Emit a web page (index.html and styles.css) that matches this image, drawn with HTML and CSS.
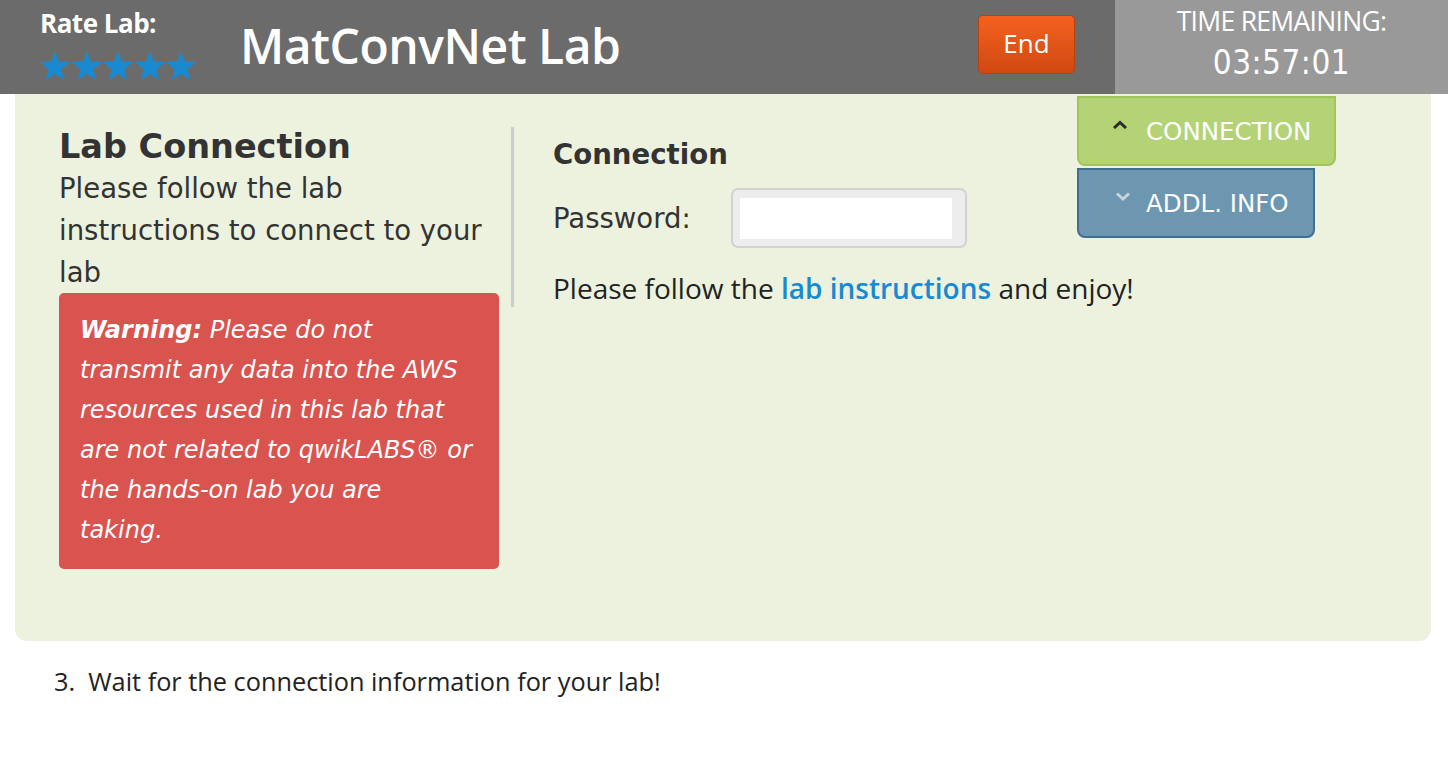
FILE: index.html
```html
<!DOCTYPE html>
<html>
<head>
<meta charset="utf-8">
<link rel="stylesheet" href="styles.css">
</head>
<body>
<header class="topbar">
  <div class="rate">
    <div class="rate-label">Rate Lab:</div>
    <div class="stars">
      <svg viewBox="0 0 24 23" class="star"><path d="M12 0.5l2.9 7.3 8.3.5-6.4 5.3 2.1 8.1L12 17.2l-6.9 4.5 2.1-8.1L0.8 8.3l8.3-.5z"/></svg>
      <svg viewBox="0 0 24 23" class="star"><path d="M12 0.5l2.9 7.3 8.3.5-6.4 5.3 2.1 8.1L12 17.2l-6.9 4.5 2.1-8.1L0.8 8.3l8.3-.5z"/></svg>
      <svg viewBox="0 0 24 23" class="star"><path d="M12 0.5l2.9 7.3 8.3.5-6.4 5.3 2.1 8.1L12 17.2l-6.9 4.5 2.1-8.1L0.8 8.3l8.3-.5z"/></svg>
      <svg viewBox="0 0 24 23" class="star"><path d="M12 0.5l2.9 7.3 8.3.5-6.4 5.3 2.1 8.1L12 17.2l-6.9 4.5 2.1-8.1L0.8 8.3l8.3-.5z"/></svg>
      <svg viewBox="0 0 24 23" class="star"><path d="M12 0.5l2.9 7.3 8.3.5-6.4 5.3 2.1 8.1L12 17.2l-6.9 4.5 2.1-8.1L0.8 8.3l8.3-.5z"/></svg>
    </div>
  </div>
  <h1 class="title">MatConvNet Lab</h1>
  <div class="end-wrap"><button class="end-btn">End</button></div>
  <div class="timer">
    <div class="timer-label">TIME REMAINING:</div>
    <div class="timer-value">03:57:01</div>
  </div>
</header>

<section class="panel">
  <div class="left">
    <h2 class="lc-title">Lab Connection</h2>
    <p class="lc-text">Please follow the lab instructions to connect to your lab</p>
    <div class="warning"><b>Warning:</b> Please do not transmit any data into the AWS resources used in this lab that are not related to qwikLABS® or the hands-on lab you are<br>taking.</div>
  </div>
  <div class="divider"></div>
  <div class="right">
    <h3 class="conn-title">Connection</h3>
    <div class="pw-row">
      <span class="pw-label">Password:</span>
      <div class="pw-box"><div class="pw-inner"></div></div>
    </div>
    <p class="enjoy">Please follow the <a class="link" href="#">lab instructions</a> and enjoy!</p>
  </div>
  <div class="tabs">
    <div class="tab tab-conn">
      <svg class="chev" viewBox="0 0 16 9"><path d="M2 8L8 2.5 14 8" fill="none" stroke="#2b2b2b" stroke-width="3"/></svg>CONNECTION
    </div>
    <div class="tab tab-info">
      <svg class="chev chev-down" viewBox="0 0 16 9"><path d="M2 1.5L8 7 14 1.5" fill="none" stroke="#c9d3da" stroke-width="3"/></svg>ADDL. INFO
    </div>
  </div>
</section>

<p class="step">3.&nbsp; Wait for the connection information for your lab!</p>
</body>
</html>
```
FILE: styles.css
```css
* { box-sizing: border-box; }
body {
  margin: 0;
  background: #fff;
  font-family: "DejaVu Sans", Verdana, sans-serif;
  color: #333;
}
.topbar {
  height: 94px;
  background: #6b6b6b;
  display: flex;
  align-items: stretch;
}
.rate {
  width: 240px;
  padding: 5px 0 0 40px;
}
.rate-label {
  font-family: "Open Sans", sans-serif;
  font-weight: 700;
  font-size: 26px;
  color: #fff;
  letter-spacing: -0.5px;
}
.stars {
  display: flex;
  margin-top: 10px;
  margin-left: -1px;
}
.star {
  width: 32px;
  height: 31px;
  margin-right: -0.5px;
  fill: #1a8ad0;
}
.title {
  margin: 0;
  font-family: "Open Sans", sans-serif;
  font-weight: 600;
  font-size: 48px;
  color: #fff;
  line-height: 92px;
  letter-spacing: -0.5px;
  width: 738px;
}
.end-wrap {
  padding-top: 15px;
  width: 137px;
}
.end-btn {
  width: 97px;
  height: 59px;
  border: 1px solid #b8420f;
  border-radius: 5px;
  background: linear-gradient(#f4611f, #d04912);
  color: #fff;
  font-family: "Open Sans", sans-serif;
  font-size: 26px;
  font-weight: 500;
  padding: 0 0 4px;
}
.timer {
  flex: 1;
  background: #999;
  color: #fff;
  text-align: center;
  padding-top: 3px;
  font-family: "Open Sans", sans-serif;
}
.timer-label {
  font-size: 26.5px;
  letter-spacing: -0.7px;
  line-height: 36px;
}
.timer-value {
  font-family: "DejaVu Sans Condensed", "DejaVu Sans", sans-serif;
  font-size: 33px;
  line-height: 48px;
  letter-spacing: 0.5px;
}
.panel {
  margin: 0 17px 0 15px;
  background: #edf2de;
  border-radius: 0 0 12px 12px;
  height: 547px;
  display: flex;
  position: relative;
  padding: 33px 0 0 44px;
}
.left {
  width: 452px;
}
.lc-title {
  margin: 0;
  font-size: 33.5px;
  font-weight: 700;
  line-height: 40px;
  color: #333;
}
.lc-text {
  margin: 0;
  width: 440px;
  font-size: 27.5px;
  line-height: 42px;
  color: #333;
}
.warning {
  width: 440px;
  background: #d9534f;
  border-radius: 5px;
  color: #fff;
  font-style: italic;
  font-size: 24px;
  line-height: 40px;
  padding: 17px 22px 19px 21px;
}
.divider {
  width: 3px;
  height: 180px;
  background: #ccc;
}
.right {
  padding-left: 39px;
  padding-top: 8px;
}
.conn-title {
  margin: 0;
  font-size: 27.6px;
  font-weight: 700;
  line-height: 40px;
}
.pw-row {
  display: flex;
  align-items: center;
  margin-top: 13px;
}
.pw-label {
  font-size: 27.5px;
  width: 178px;
}
.pw-box {
  width: 236px;
  height: 60px;
  background: #ededed;
  border: 2px solid #d2d2d2;
  border-radius: 7px;
  padding: 8px 13px 7px 7px;
}
.pw-inner {
  background: #fff;
  height: 100%;
}
.enjoy {
  margin: 21px 0 0;
  font-family: "Open Sans", sans-serif;
  font-size: 28px;
  line-height: 38px;
  color: #222;
}
.link {
  color: #1a8ad0;
  text-decoration: none;
  font-weight: 600;
}
.tabs {
  position: absolute;
  top: 2px;
  left: 1062px;
  display: flex;
  flex-direction: column;
  gap: 2px;
}
.tab {
  height: 70px;
  color: #fff;
  font-family: "DejaVu Sans", sans-serif;
  font-size: 24.5px;
  display: flex;
  align-items: center;
  padding-left: 33px;
  border-radius: 0 0 8px 8px;
}
.tab-conn {
  width: 259px;
  background: #b4d377;
  border: 2px solid #a0c55a;
}
.tab-info {
  width: 238px;
  background: #6d96b0;
  border: 2px solid #3f6f93;
}
.chev {
  width: 16px;
  height: 9px;
  margin-right: 18px;
  margin-top: -14px;
}
.chev-down {
  margin-left: 3px;
  margin-right: 15px;
  margin-top: -13px;
}
.step {
  margin: 23px 0 0 54px;
  font-family: "Open Sans", sans-serif;
  font-size: 25.3px;
  line-height: 35px;
  color: #222;
}
```
